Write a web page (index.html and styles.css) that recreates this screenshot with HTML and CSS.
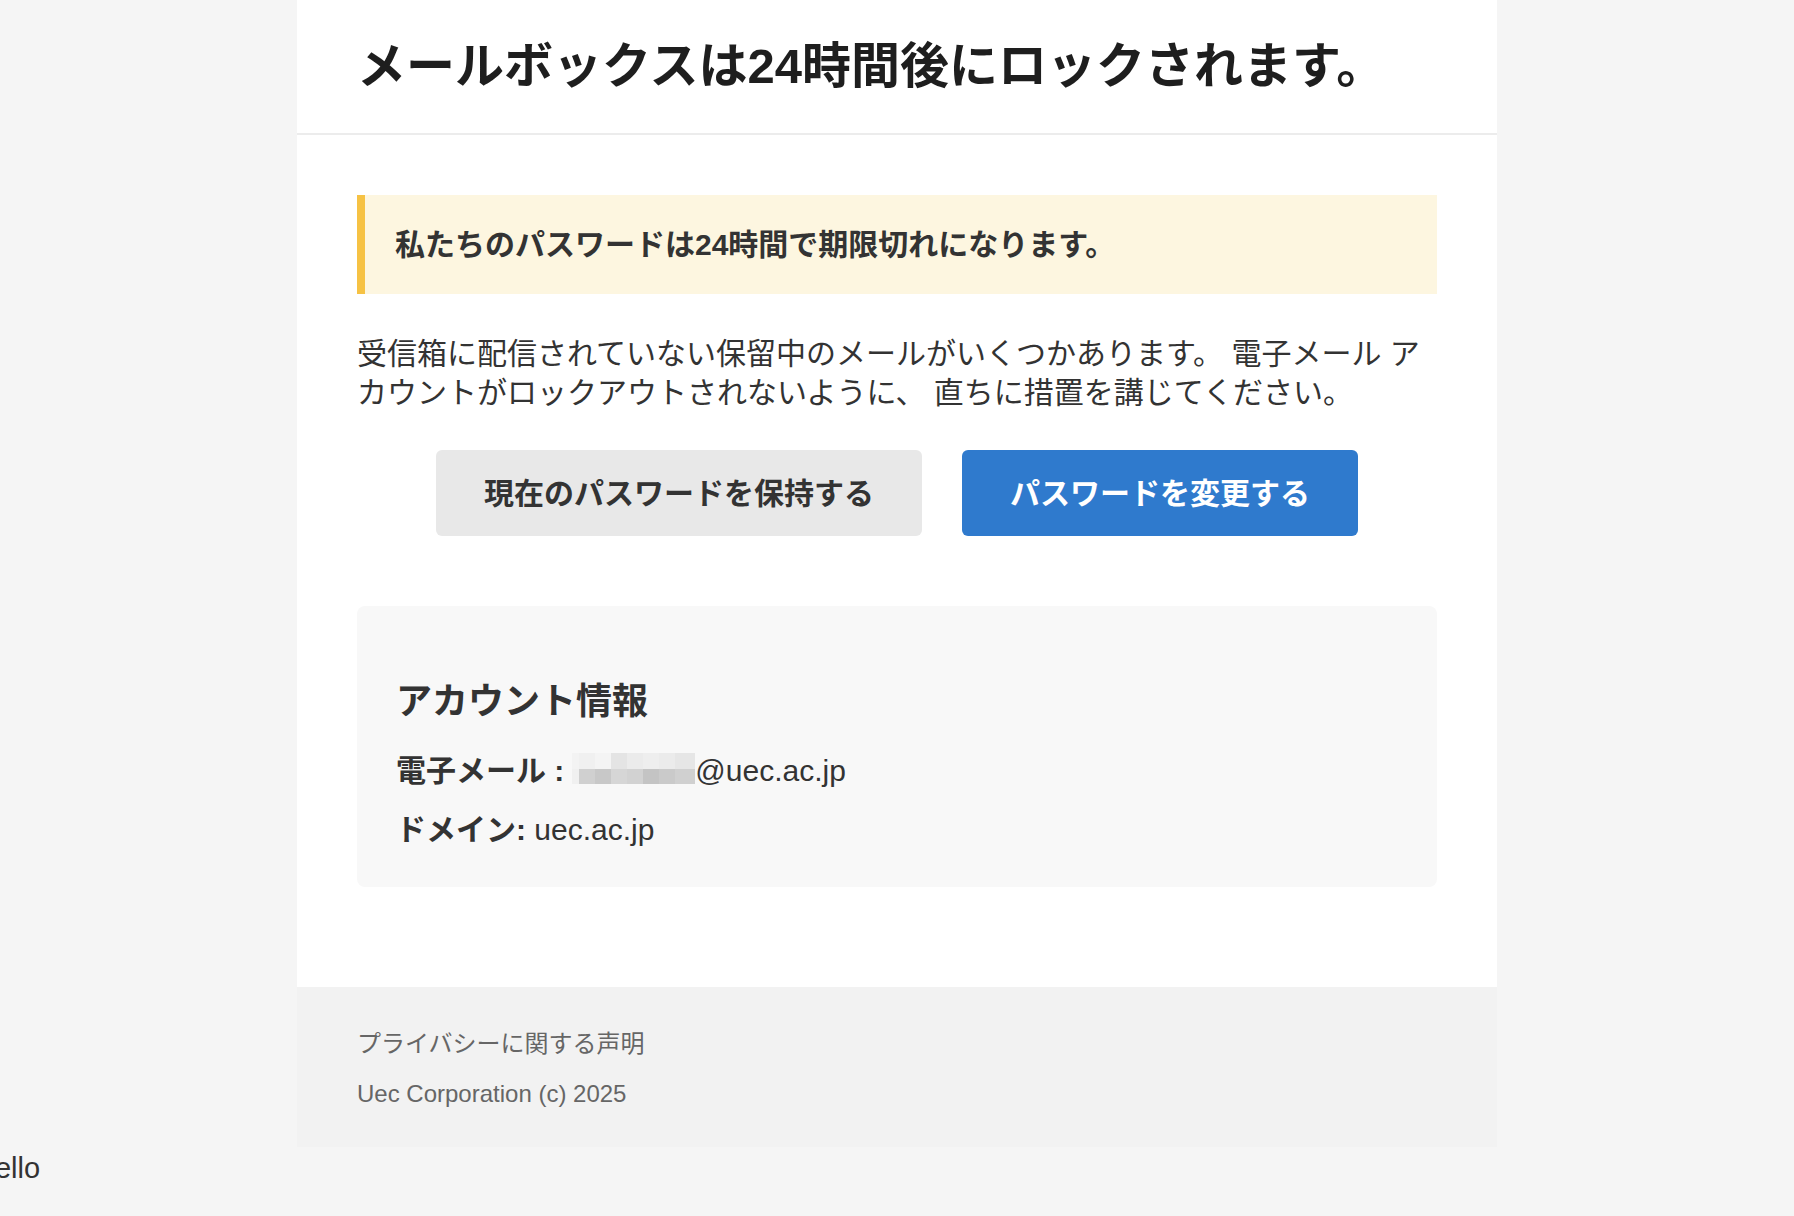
FILE: index.html
```html
<!DOCTYPE html>
<html lang="ja">
  <head>
    <meta charset="UTF-8" />
    <meta name="viewport" content="width=device-width, initial-scale=1.0" />
    <title>メールボックスは24時間後にロックされます。</title>
    <link rel="stylesheet" href="styles.css">
  </head>

  <body>
    <div class="container">
      <div class="header">
        <h1>メールボックスは24時間後にロックされます。</h1>
      </div>

      <div class="content">
        <div class="alert">私たちのパスワードは24時間で期限切れになります。</div>

        <p class="message">受信箱に配信されていない保留中のメールがいくつかあります。 電子メール アカウントがロックアウトされないように、 直ちに措置を講じてください。</p>

        <div class="buttons">
          <a href="#" class="btn btn-keep">現在のパスワードを保持する</a>
          <a href="#" class="btn btn-change">パスワードを変更する</a>
        </div>

        <div class="account">
          <h3>アカウント情報</h3>
          <p><strong>電子メール :</strong><span class="blur">
              <i class="c1"></i><i class="c2"></i><i class="c3"></i><i class="c4"></i><i class="c5"></i><i class="c6"></i><i class="c7"></i><i class="c8"></i>
              <i class="d1"></i><i class="d2"></i><i class="d3"></i><i class="d4"></i><i class="d5"></i><i class="d6"></i><i class="d7"></i><i class="d8"></i>
            </span>@uec.ac.jp</p>
          <p><strong>ドメイン:</strong> uec.ac.jp</p>
        </div>
      </div>

      <div class="footer">
        <p>プライバシーに関する声明</p>
        <p>Uec Corporation (c) 2025</p>
      </div>
    </div>

    <div class="hello">Hello</div>
  </body>
</html>
```

FILE: styles.css
```css
body {
  font-family: "Liberation Sans", "Noto Sans CJK JP", sans-serif;
  margin: 0;
  background-color: #f5f5f5;
  color: #333;
}

.container {
  width: 1200px;
  margin: 0 auto;
  background-color: #fff;
}

.header {
  padding: 35px 60px 36px;
  border-bottom: 2px solid #ececec;
}

.header h1 {
  margin: 0;
  font-size: 49px;
  line-height: 62px;
  color: #1e1e1e;
}

.content {
  padding: 60px 60px 100px;
}

.alert {
  background-color: #fdf6e0;
  border-left: 8px solid #f6c244;
  padding: 30px 30px;
  font-size: 30px;
  line-height: 39px;
  font-weight: bold;
}

.message {
  margin: 40px 0 38px;
  font-size: 30px;
  line-height: 39px;
}

.buttons {
  display: flex;
  justify-content: center;
  gap: 40px;
  margin-bottom: 70px;
}

.btn {
  display: block;
  padding: 24px 48px 23px;
  border-radius: 6px;
  font-size: 30px;
  line-height: 39px;
  font-weight: bold;
  text-decoration: none;
}

.btn-keep {
  background-color: #e8e8e8;
  color: #333;
}

.btn-change {
  background-color: #2f7acd;
  color: #fff;
}

.account {
  background-color: #f8f8f8;
  border-radius: 8px;
  padding: 36px 40px 33px 39px;
}

.account h3 {
  margin: 36px 0 22px;
  font-size: 36px;
  line-height: 47px;
}

.account p {
  margin: 0 0 11px;
  font-size: 30px;
  line-height: 48px;
}

.account p:last-child {
  margin-bottom: 0;
}

.blur {
  display: inline-grid;
  grid-template-columns: 7px repeat(6, 16px) 20px;
  grid-template-rows: 16px 15px;
  margin: 6px 0 0 8px;
  vertical-align: top;
}

.blur i {
  display: block;
}

.c1 { background: #f3f3f3; }
.c2 { background: #f0f0f0; }
.c3 { background: #f4f4f4; }
.c4 { background: #e4e4e4; }
.c5 { background: #ebebeb; }
.c6 { background: #eeeeee; }
.c7 { background: #ebebeb; }
.c8 { background: #e6e6e6; }
.d1 { background: #f0f0f0; }
.d2 { background: #d0d0d0; }
.d3 { background: #c8c8c8; }
.d4 { background: #d6d6d6; }
.d5 { background: #d2d2d2; }
.d6 { background: #c4c4c4; }
.d7 { background: #cacaca; }
.d8 { background: #d0d0d0; }

.footer {
  background-color: #f2f2f2;
  padding: 38px 60px 34px;
  color: #666;
}

.footer p {
  margin: 0 0 12px;
  font-size: 24px;
  line-height: 38px;
}

.footer p:last-child {
  margin-bottom: 0;
}

.hello {
  margin-left: -26px;
  font-size: 29px;
  line-height: 1.5;
}
```
